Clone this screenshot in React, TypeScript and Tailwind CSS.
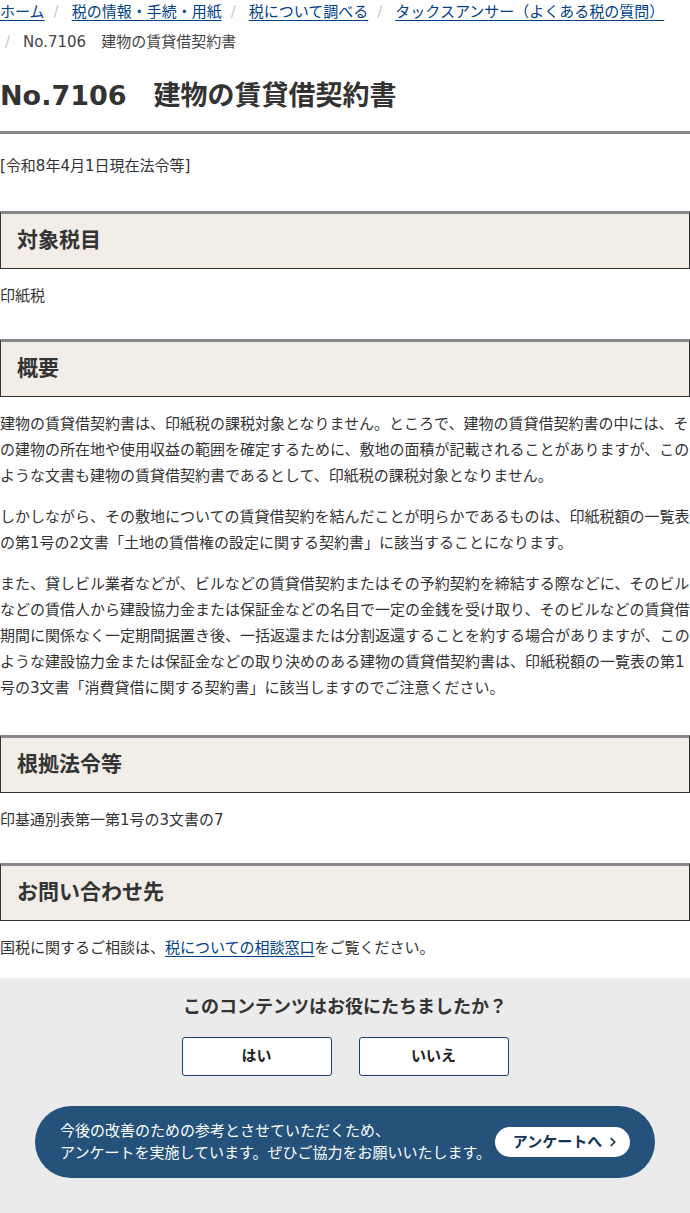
import { ChevronRight } from 'lucide-react';

const FONT = { fontFamily: '"DejaVu Sans", "Noto Sans CJK JP", "Noto Sans", sans-serif' };

function Crumb({ children, first = false, link = true }: { children: React.ReactNode, first?: boolean, link?: boolean }) {
  return (
    <li className="inline-block mb-[6px] leading-[24px] mr-[4px]">
      {!first && <span className="text-[#c8c8c8] pl-[5px] pr-[13px]">/</span>}
      {link ? (
        <a href="#" className="text-[#00418a] underline underline-offset-[3px]">{children}</a>
      ) : (
        <span className="text-[#444]">{children}</span>
      )}
    </li>
  );
}

function SectionHead({ title, className = '' }: { title: string, className?: string }) {
  return (
    <h2 className={`h-[58px] flex items-center px-[16px] bg-[#f2ede7] border border-[#333] border-t-[3px] border-t-[#888] text-[21px] font-bold text-[#333] mb-[14px] ${className}`}>
      {title}
    </h2>
  );
}

export default function App() {
  return (
    <div className="w-[690px] bg-white text-[#333] text-[15px]" style={FONT}>
      <ul className="leading-[24px]">
        <Crumb first>ホーム</Crumb>
        <Crumb>税の情報・手続・用紙</Crumb>
        <Crumb>税について調べる</Crumb>
        <Crumb>タックスアンサー（よくある税の質問）</Crumb>
        <Crumb link={false}>No.7106　建物の賃貸借契約書</Crumb>
      </ul>

      <h1 className="mt-[16px] text-[27px] leading-[40px] font-bold text-[#333] pb-[15px] border-b-[3px] border-[#888]">
        No.7106　建物の賃貸借契約書
      </h1>

      <p className="mt-[19px] leading-[26px]">[令和8年4月1日現在法令等]</p>

      <SectionHead title="対象税目" className="mt-[32px]" />
      <p className="leading-[26px]">印紙税</p>

      <SectionHead title="概要" className="mt-[30px]" />
      <div className="leading-[26px] space-y-[15px]">
        <p>建物の賃貸借契約書は、印紙税の課税対象となりません。ところで、建物の賃貸借契約書の中には、その建物の所在地や使用収益の範囲を確定するために、敷地の面積が記載されることがありますが、このような文書も建物の賃貸借契約書であるとして、印紙税の課税対象となりません。</p>
        <p>しかしながら、その敷地についての賃貸借契約を結んだことが明らかであるものは、印紙税額の一覧表の第1号の2文書「土地の賃借権の設定に関する契約書」に該当することになります。</p>
        <p>また、貸しビル業者などが、ビルなどの賃貸借契約またはその予約契約を締結する際などに、そのビルなどの賃借人から建設協力金または保証金などの名目で一定の金銭を受け取り、そのビルなどの賃貸借期間に関係なく一定期間据置き後、一括返還または分割返還することを約する場合がありますが、このような建設協力金または保証金などの取り決めのある建物の賃貸借契約書は、印紙税額の一覧表の第1号の3文書「消費貸借に関する契約書」に該当しますのでご注意ください。</p>
      </div>

      <SectionHead title="根拠法令等" className="mt-[34px]" />
      <p className="leading-[26px]">印基通別表第一第1号の3文書の7</p>

      <SectionHead title="お問い合わせ先" className="mt-[30px]" />
      <p className="leading-[26px]">
        国税に関するご相談は、<a href="#" className="text-[#00418a] underline underline-offset-[3px]">税についての相談窓口</a>をご覧ください。
      </p>

      <div className="mt-[17px] bg-[#ebebeb] pt-[15px] pb-[35px]">
        <p className="text-center text-[18px] font-bold leading-[27px] text-[#333]">このコンテンツはお役にたちましたか？</p>
        <div className="mt-[17px] flex justify-center gap-[27px]">
          <button className="w-[150px] h-[39px] bg-white border border-[#1d3f6e] rounded-[3px] text-[15px] font-bold text-[#222]">はい</button>
          <button className="w-[150px] h-[39px] bg-white border border-[#1d3f6e] rounded-[3px] text-[15px] font-bold text-[#222]">いいえ</button>
        </div>
        <div className="mt-[30px] mx-[35px] h-[72px] rounded-full bg-[#24527b] flex items-center justify-between pl-[25px] pr-[25px]">
          <p className="text-white text-[15px] leading-[22px]">
            今後の改善のための参考とさせていただくため、<br />
            アンケートを実施しています。ぜひご協力をお願いいたします。
          </p>
          <a href="#" className="shrink-0 w-[135px] h-[30px] rounded-full bg-white flex items-center justify-center gap-[4px] pl-[8px] text-[15px] font-bold text-[#12315a]">
            アンケートへ
            <ChevronRight className="w-[14px] h-[14px]" strokeWidth={3} />
          </a>
        </div>
      </div>
    </div>
  );
}
